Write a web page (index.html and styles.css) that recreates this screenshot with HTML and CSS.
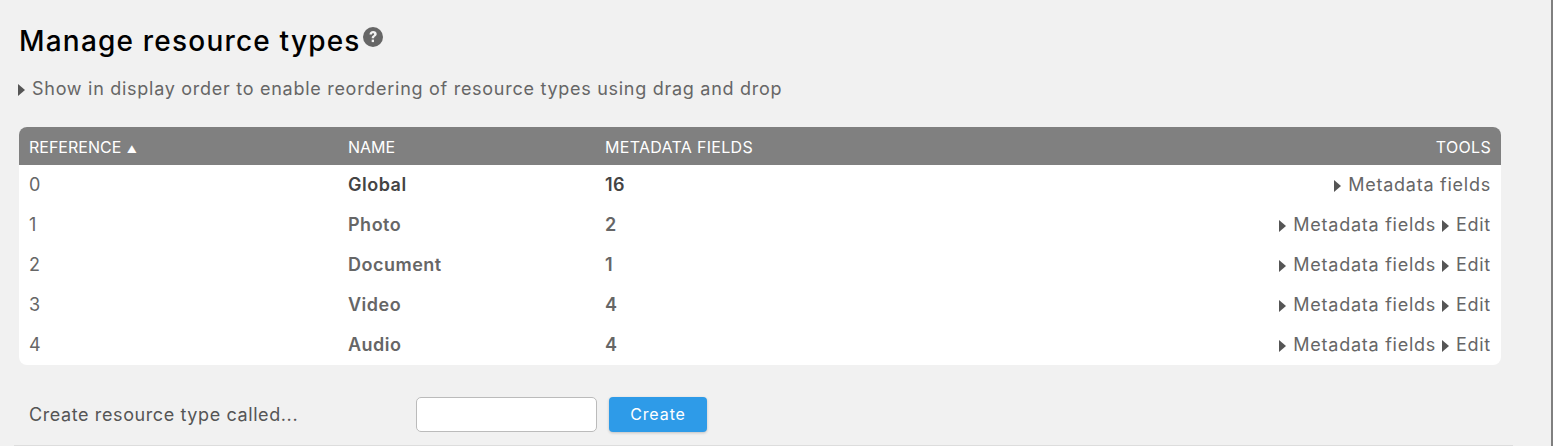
FILE: index.html
```html
<!DOCTYPE html>
<html>
  <head>
    <title>Manage resource types</title>
    <link rel="stylesheet" href="styles.css">
  </head>
  <body>
    <main class="page">
      <div class="box">
        <h1>Manage resource types<svg class="help" viewBox="0 0 20 20"><circle cx="10" cy="10" r="10" fill="#666"/><path d="M6.500 7.600c.1-2.200 1.500-3.500 3.700-3.500 2 0 3.500 1.200 3.500 3 0 1.300-.8 2-1.600 2.500-.8.500-1 .8-1 1.700H8.700c0-1.500.4-2.200 1.400-2.800.7-.4 1-.7 1-1.200 0-.6-.4-1-1-1-.7 0-1.100.5-1.200 1.300z" fill="#f1f1f1"/><rect x="8.700" y="12.600" width="2.300" height="2.500" fill="#f1f1f1"/></svg></h1>
        <p class="order-link"><a href="#">Show in display order to enable reordering of resource types using drag and drop</a></p>

        <table class="list">
          <thead>
            <tr>
              <th class="col-ref">Reference <span class="sort">▲</span></th>
              <th class="col-name">Name</th>
              <th class="col-fields">Metadata fields</th>
              <th class="tools">Tools</th>
            </tr>
          </thead>
          <tbody>
            <tr class="global">
              <td>0</td>
              <td class="strong">Global</td>
              <td class="strong">16</td>
              <td class="tools"><a href="#">Metadata fields</a></td>
            </tr>
            <tr>
              <td>1</td>
              <td class="strong">Photo</td>
              <td class="strong">2</td>
              <td class="tools"><a href="#">Metadata fields</a> <a href="#">Edit</a></td>
            </tr>
            <tr>
              <td>2</td>
              <td class="strong">Document</td>
              <td class="strong">1</td>
              <td class="tools"><a href="#">Metadata fields</a> <a href="#">Edit</a></td>
            </tr>
            <tr>
              <td>3</td>
              <td class="strong">Video</td>
              <td class="strong">4</td>
              <td class="tools"><a href="#">Metadata fields</a> <a href="#">Edit</a></td>
            </tr>
            <tr>
              <td>4</td>
              <td class="strong">Audio</td>
              <td class="strong">4</td>
              <td class="tools"><a href="#">Metadata fields</a> <a href="#">Edit</a></td>
            </tr>
          </tbody>
        </table>

        <form class="create">
          <label for="newType">Create resource type called...</label>
          <input type="text" id="newType" />
          <button type="button">Create</button>
        </form>
      </div>
    </main>
  </body>
</html>
```

FILE: styles.css
```css
body {
  font-family: Inter, "Open Sans", sans-serif;
  margin: 0;
  padding: 0;
  height: 446px;
  overflow: hidden;
  background-color: #f1f1f1;
  color: #666;
}

.page {
  box-sizing: border-box;
  width: 1553px;
  height: 446px;
  padding-left: 14px;
  border-right: 2px solid #808080;
}

.box {
  box-sizing: border-box;
  width: 1499px;
  height: 446px;
  padding: 22px 12px 0 5px;
  border-bottom: 1px solid #ddd;
}

h1 {
  display: flex;
  align-items: flex-start;
  margin: 0;
  height: 38px;
  font-size: 28px;
  line-height: 38px;
  font-weight: 500;
  color: #000;
  letter-spacing: 1.2px;
}

.help {
  width: 20px;
  height: 20px;
  margin: 5px 0 0 2px;
}

a {
  color: #666;
  text-decoration: none;
}

a::before {
  content: "";
  display: inline-block;
  border-left: 7px solid #555;
  border-top: 6px solid transparent;
  border-bottom: 6px solid transparent;
  margin-right: 7px;
  vertical-align: -1px;
}

.order-link {
  margin: 17px 0 0;
  height: 50px;
  font-size: 18px;
  line-height: 24px;
  letter-spacing: 0.72px;
  margin-left: -1px;
}

.list {
  width: 1482px;
  border-collapse: separate;
  border-spacing: 0;
  background-color: #fff;
  border-radius: 8px;
  font-size: 18px;
  letter-spacing: 0.75px;
  table-layout: fixed;
}

.list th {
  box-sizing: border-box;
  height: 38px;
  padding: 1px 10px 0;
  background-color: #808080;
  color: #fff;
  font-size: 16px;
  font-weight: 400;
  text-align: left;
  text-transform: uppercase;
  letter-spacing: 0.3px;
}

.list th:first-child {
  border-top-left-radius: 8px;
}

.list th:last-child {
  border-top-right-radius: 8px;
}

.list td {
  height: 40px;
  padding: 0 10px 1px;
  box-sizing: border-box;
}

.list tr:last-child td:first-child {
  border-bottom-left-radius: 8px;
}

.list tr:last-child td:last-child {
  border-bottom-right-radius: 8px;
}

.list .col-ref {
  width: 319px;
  letter-spacing: 0;
}

.list .col-name {
  width: 257px;
  letter-spacing: 0;
}

.col-fields {
  width: 320px;
}

.list .tools {
  text-align: right;
}

.strong {
  font-weight: 600;
  letter-spacing: 0.5px;
}

.global .strong {
  color: #444;
}

.sort {
  font-size: 10px;
  margin-left: 1px;
}

.create {
  display: flex;
  align-items: center;
  margin-top: 32px;
  padding-left: 10px;
  font-size: 18px;
  letter-spacing: 0.6px;
}

.create label {
  width: 387px;
  color: #555;
}

.create input {
  box-sizing: border-box;
  width: 181px;
  height: 35px;
  border: 1px solid #bbb;
  border-radius: 5px;
  background-color: #fff;
}

.create button {
  width: 98px;
  height: 35px;
  margin-left: 12px;
  padding-bottom: 3px;
  border: none;
  border-radius: 4px;
  background-color: #2e9be8;
  color: #fff;
  font-family: inherit;
  font-size: 16px;
  letter-spacing: 0.9px;
  box-shadow: 0 1px 3px rgba(0, 0, 0, 0.2);
}
```
